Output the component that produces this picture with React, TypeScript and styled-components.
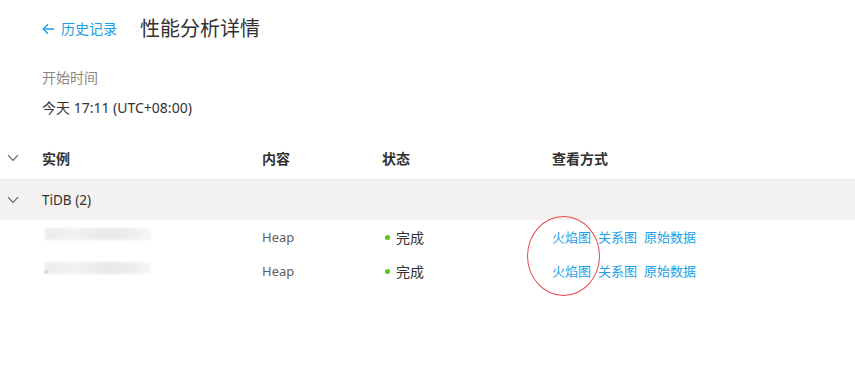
import React from "react";
import styled, { createGlobalStyle } from "styled-components";

const GlobalStyle = createGlobalStyle`
  html, body {
    margin: 0;
    padding: 0;
    background: #fff;
  }
  body {
    font-family: "Noto Sans", "Noto Sans CJK SC", sans-serif;
    color: #323130;
  }
`;

const LINK = "#1a9fe8";

const Page = styled.div`
  position: relative;
  width: 855px;
  height: 384px;
  overflow: hidden;
`;

const Head = styled.div`
  display: flex;
  align-items: center;
  gap: 23px;
  padding: 14px 0 0 42px;
  height: 30px;
`;

const BackLink = styled.a`
  display: flex;
  align-items: center;
  gap: 6px;
  color: ${LINK};
  font-size: 14px;
  line-height: 20px;
  text-decoration: none;
`;

const Title = styled.h1`
  margin: 0;
  font-size: 20px;
  font-weight: 400;
  line-height: 28px;
  color: #323130;
`;

const Meta = styled.div`
  padding: 24px 0 19px 42px;
  display: flex;
  flex-direction: column;
  gap: 10px;
`;

const MetaLabel = styled.div`
  font-size: 14px;
  line-height: 20px;
  color: #8a8886;
`;

const MetaValue = styled.div`
  font-size: 14px;
  line-height: 20px;
  color: #323130;
`;

const Row = styled.div<{ $kind: "header" | "group" | "item" }>`
  display: grid;
  grid-template-columns: 42px 220px 120px 170px 1fr;
  align-items: center;
  font-size: 13px;
  height: ${(p) => (p.$kind === "item" ? 34 : p.$kind === "group" ? 40 : 43)}px;
  background: ${(p) => (p.$kind === "group" ? "#f3f2f1" : "#fff")};
  border-bottom: ${(p) => (p.$kind === "header" ? "1px solid #edebe9" : "none")};
  box-sizing: border-box;
`;

const ChevronCell = styled.div`
  display: flex;
  justify-content: center;
  padding-right: 16px;
`;

const HeaderCell = styled.div`
  font-size: 14px;
  font-weight: 600;
  color: #323130;
  padding-bottom: 1px;
`;

const GroupTitle = styled.div`
  grid-column: 2 / span 4;
  font-size: 13.5px;
  font-weight: 400;
  color: #323130;
`;

const Muted = styled.div`
  color: #605e5c;
`;

const Status = styled.div`
  display: flex;
  align-items: center;
  gap: 6px;
  padding-left: 3px;
  font-size: 14px;
  color: #323130;
`;

const Dot = styled.span`
  width: 5px;
  height: 5px;
  border-radius: 50%;
  background: #52c41a;
`;

const Links = styled.div`
  display: flex;
  gap: 7px;
  margin-top: -2px;
`;

const Action = styled.a`
  color: ${LINK};
  text-decoration: none;
  cursor: pointer;
`;

const Blurred = styled.div<{ $dot?: boolean }>`
  position: relative;
  width: 106px;
  height: 12px;
  margin: 0 0 6px 3px;
  background: linear-gradient(
    90deg,
    #ececec 0%,
    #f2f2f2 30%,
    #e8e8e8 60%,
    #eeeeee 85%,
    #f7f7f7 100%
  );
  filter: blur(1px);
  &::before {
    content: "";
    display: ${(p) => (p.$dot ? "block" : "none")};
    position: absolute;
    left: 0;
    bottom: 1px;
    width: 2px;
    height: 2px;
    background: #999;
  }
`;

const Annotation = styled.div`
  position: absolute;
  left: 527px;
  top: 216px;
  width: 71px;
  height: 78px;
  border: 1px solid #e8454a;
  border-radius: 50%;
  pointer-events: none;
`;

const Chevron = () => (
  <svg width="12" height="8" viewBox="0 0 12 8">
    <path d="M1 1.2 L6 6.4 L11 1.2" fill="none" stroke="#605e5c" strokeWidth="1.1" />
  </svg>
);

const BackArrow = () => (
  <svg width="13" height="12" viewBox="0 0 13 12">
    <path d="M12 6 H1.5 M6 1.2 L1.2 6 L6 10.8" fill="none" stroke={LINK} strokeWidth="1.3" />
  </svg>
);

const items = [{ dot: false }, { dot: true }];

export default function App() {
  return (
    <Page>
      <GlobalStyle />
      <Head>
        <BackLink href="#">
          <BackArrow />
          历史记录
        </BackLink>
        <Title>性能分析详情</Title>
      </Head>
      <Meta>
        <MetaLabel>开始时间</MetaLabel>
        <MetaValue>今天 17:11 (UTC+08:00)</MetaValue>
      </Meta>
      <div>
        <Row $kind="header">
          <ChevronCell>
            <Chevron />
          </ChevronCell>
          <HeaderCell>实例</HeaderCell>
          <HeaderCell>内容</HeaderCell>
          <HeaderCell>状态</HeaderCell>
          <HeaderCell>查看方式</HeaderCell>
        </Row>
        <Row $kind="group">
          <ChevronCell>
            <Chevron />
          </ChevronCell>
          <GroupTitle>TiDB (2)</GroupTitle>
        </Row>
        {items.map((it, i) => (
          <Row $kind="item" key={i}>
            <div />
            <Blurred $dot={it.dot} />
            <Muted>Heap</Muted>
            <Status>
              <Dot />
              完成
            </Status>
            <Links>
              <Action>火焰图</Action>
              <Action>关系图</Action>
              <Action>原始数据</Action>
            </Links>
          </Row>
        ))}
      </div>
      <Annotation />
    </Page>
  );
}
